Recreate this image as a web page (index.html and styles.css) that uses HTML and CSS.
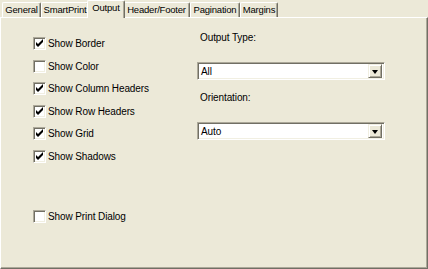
FILE: index.html
```html
<!DOCTYPE html>
<html lang="en">
<head>
    <meta charset="UTF-8">
    <title>Print Options</title>
    <link rel="stylesheet" href="styles.css">
</head>
<body>
    <div class="dialog">
        <div class="tabs">
            <div class="tab tab-general">General</div>
            <div class="tab tab-smartprint">SmartPrint</div>
            <div class="tab tab-output active">Output</div>
            <div class="tab tab-header">Header/Footer</div>
            <div class="tab tab-pagination">Pagination</div>
            <div class="tab tab-margins">Margins</div>
        </div>

        <div class="panel">
            <div class="options">
                <label class="check"><span class="box on"></span>Show Border</label>
                <label class="check"><span class="box"></span>Show Color</label>
                <label class="check"><span class="box on"></span>Show Column Headers</label>
                <label class="check"><span class="box on"></span>Show Row Headers</label>
                <label class="check"><span class="box on"></span>Show Grid</label>
                <label class="check"><span class="box on"></span>Show Shadows</label>
                <label class="check print-dialog"><span class="box"></span>Show Print Dialog</label>
            </div>

            <div class="settings">
                <div class="field-label">Output Type:</div>
                <div class="combo">
                    <span class="combo-text">All</span>
                    <span class="combo-btn"></span>
                </div>
                <div class="field-label second">Orientation:</div>
                <div class="combo">
                    <span class="combo-text">Auto</span>
                    <span class="combo-btn"></span>
                </div>
            </div>
        </div>
    </div>
</body>
</html>
```

FILE: styles.css
```css
html, body {
    margin: 0;
    padding: 0;
}
body {
    background-color: #ece9d8; /* classic dialog face */
    font-family: "Liberation Sans", Arial, sans-serif;
    font-size: 10px;
    letter-spacing: -0.1px;
    color: #000;
}
.dialog {
    width: 428px;
    height: 269px;
    display: flex;
    flex-direction: column;
}

/* tab strip */
.tabs {
    display: flex;
    align-items: flex-end;
    height: 17px;
    padding-left: 2px;
    font-size: 9.5px;
    letter-spacing: -0.2px;
}
.tab {
    position: relative;
    box-sizing: border-box;
    height: 15px;
    line-height: 14px;
    text-align: center;
    border-top: 1px solid #fff;
    border-left: 1px solid #fff;
    border-right: 1px solid #716f64;
    box-shadow: inset -1px 0 0 #aca899;
    border-radius: 2px 2px 0 0;
    white-space: nowrap;
}
.tab-general { width: 39px; }
.tab-smartprint { width: 48px; }
.tab-output { width: 34px; }
.tab-header { width: 67px; }
.tab-pagination { width: 50px; }
.tab-margins { width: 38px; }

.tab.active {
    width: 38px;
    height: 18px;
    line-height: 14px;
    margin: 0 -2px -1px;
    padding-bottom: 3px;
    z-index: 1;
    background-color: #ece9d8;
}

/* page body */
.panel {
    flex: 1;
    display: flex;
    padding-left: 32px;
    border-top: 1px solid #fff;
    border-left: 1px solid #fff;
    border-right: 1px solid #716f64;
    border-bottom: 1px solid #716f64;
    box-shadow: inset -1px -1px 0 #aca899;
}

.options {
    width: 164px;
    padding-top: 19px;
    display: flex;
    flex-direction: column;
    gap: 9.5px;
}
.check {
    display: flex;
    align-items: center;
    gap: 2px;
    height: 13px;
    white-space: nowrap;
}
.check.print-dialog {
    margin-top: 37.5px;
}
.box {
    box-sizing: border-box;
    width: 13px;
    height: 13px;
    background-color: #fff;
    border-top: 1px solid #aca899;
    border-left: 1px solid #aca899;
    border-right: 1px solid #fff;
    border-bottom: 1px solid #fff;
    box-shadow: inset 1px 1px 0 #716f64, inset -1px -1px 0 #f1efe2;
    flex-shrink: 0;
}
.box.on {
    background-image: url("data:image/svg+xml;utf8,<svg xmlns='http://www.w3.org/2000/svg' width='11' height='11'><path d='M2 4v3l2 2l5-5v-3l-5 5z' fill='black'/></svg>");
    background-repeat: no-repeat;
}

.settings {
    width: 188px;
    padding-top: 14px;
    display: flex;
    flex-direction: column;
}
.field-label {
    height: 12px;
    line-height: 12px;
    padding-left: 3px;
    margin-bottom: 18px;
}
.field-label.second {
    margin-top: 12px;
}
.combo {
    box-sizing: border-box;
    height: 18px;
    display: flex;
    align-items: center;
    background-color: #fff;
    border-top: 1px solid #aca899;
    border-left: 1px solid #aca899;
    border-right: 1px solid #fff;
    border-bottom: 1px solid #fff;
    box-shadow: inset 1px 1px 0 #716f64, inset -1px -1px 0 #f1efe2;
    padding: 1px 2px 1px 3px;
}
.combo-text {
    flex: 1;
}
.combo-btn {
    box-sizing: border-box;
    width: 14px;
    height: 14px;
    background-color: #ece9d8;
    border-top: 1px solid #f1efe2;
    border-left: 1px solid #f1efe2;
    border-right: 1px solid #716f64;
    border-bottom: 1px solid #716f64;
    box-shadow: inset 1px 1px 0 #fff, inset -1px -1px 0 #aca899;
    display: flex;
    align-items: center;
    justify-content: center;
}
.combo-btn::after {
    content: "";
    border-left: 3.5px solid transparent;
    border-right: 3.5px solid transparent;
    border-top: 4px solid #000;
    margin-top: 1px;
}
```
